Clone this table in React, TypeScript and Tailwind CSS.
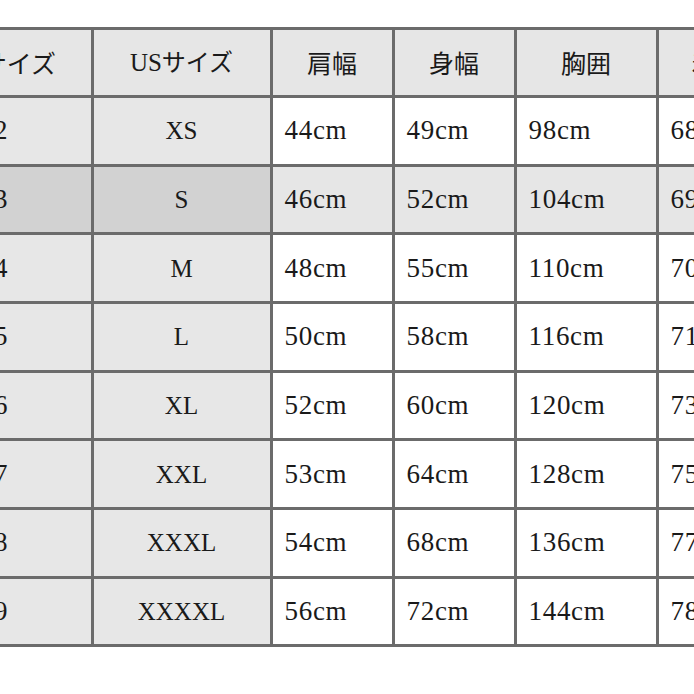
import React from 'react';

const headers = ['日本サイズ', 'USサイズ', '肩幅', '身幅', '胸囲', '着丈'];

const rows = [
  ['32', 'XS', '44cm', '49cm', '98cm', '68cm'],
  ['33', 'S', '46cm', '52cm', '104cm', '69cm'],
  ['34', 'M', '48cm', '55cm', '110cm', '70cm'],
  ['35', 'L', '50cm', '58cm', '116cm', '71cm'],
  ['36', 'XL', '52cm', '60cm', '120cm', '73cm'],
  ['37', 'XXL', '53cm', '64cm', '128cm', '75cm'],
  ['38', 'XXXL', '54cm', '68cm', '136cm', '77cm'],
  ['39', 'XXXXL', '56cm', '72cm', '144cm', '78cm'],
];

const App = () => {
  return (
    <div className="w-[694px] h-[694px] bg-white overflow-hidden pt-[26.5px]">
      <div className="grid w-max grid-cols-[193px_176px_119px_119px_139px_116px] auto-rows-[65.67px] gap-[3px] p-[3px] bg-[#6b6b6b] -ml-[105.5px] text-[#1a1a1a] font-['Liberation_Serif','Noto_Sans_CJK_JP',serif]">
        {/* Header row */}
        {headers.map((h) => (
          <div key={h} className="bg-[#e6e6e6] flex items-center justify-center text-[25px] leading-none">
            {h.startsWith('US') ? (
              <span>
                US<span className="text-[24px] font-['Noto_Sans_CJK_JP',sans-serif]">サイズ</span>
              </span>
            ) : (
              <span className="font-['Noto_Sans_CJK_JP',sans-serif]">{h}</span>
            )}
          </div>
        ))}

        {/* Body rows */}
        {rows.map((row, r) =>
          row.map((cell, c) => {
            const highlight = r === 1;
            let bg = 'bg-white';
            if (c < 2) bg = highlight ? 'bg-[#d2d2d2]' : 'bg-[#e7e7e7]';
            else if (highlight) bg = 'bg-[#e6e6e6]';
            return (
              <div
                key={`${r}-${c}`}
                className={
                  c < 2
                    ? `${bg} flex items-center justify-center ${c === 0 ? 'text-[27px] tracking-[0.7px]' : 'text-[25px]'} leading-none`
                    : `${bg} flex items-center pl-[12px] text-[27px] tracking-[0.7px] leading-none`
                }
              >
                {cell}
              </div>
            );
          })
        )}
      </div>
    </div>
  );
};

export default App;
